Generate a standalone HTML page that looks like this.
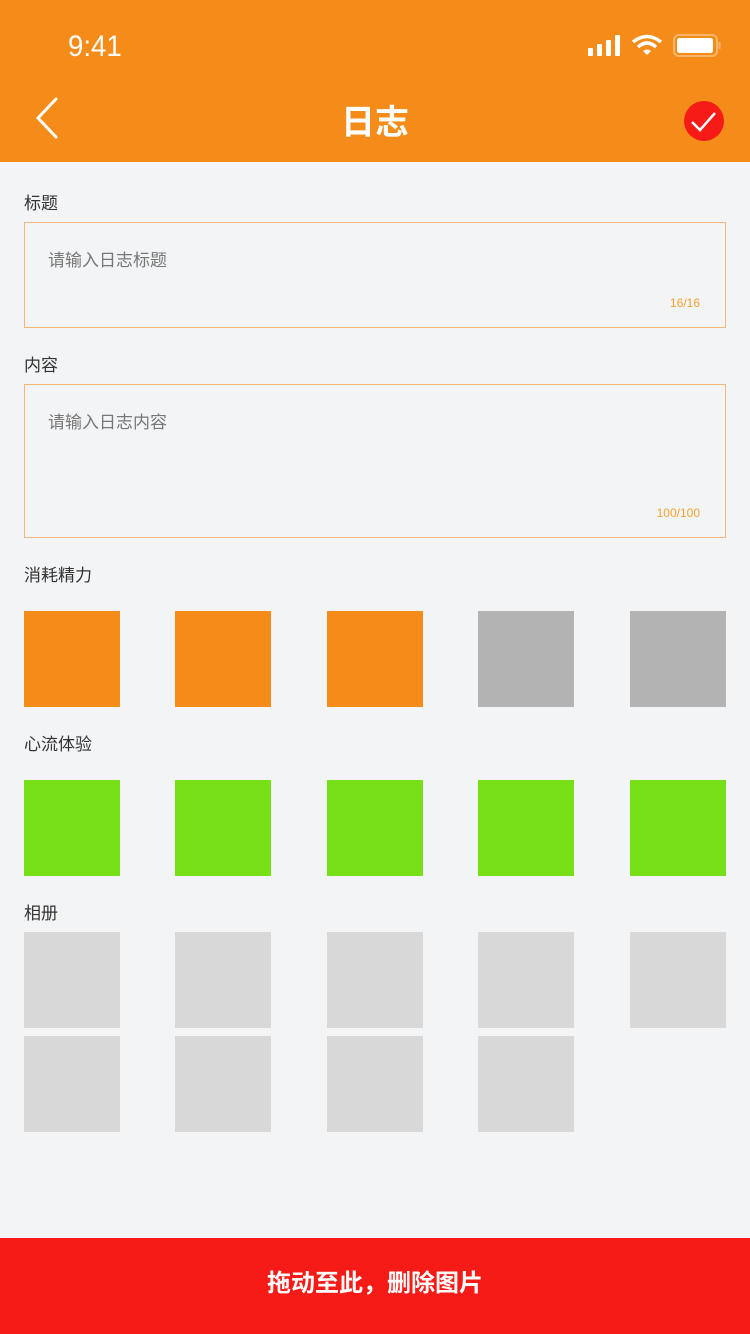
<!DOCTYPE html><html><head><meta charset="utf-8"><style>
body{margin:0;width:750px;height:1334px;background:#f3f4f6;position:relative;font-family:"Liberation Sans","Noto Sans CJK SC",sans-serif;overflow:hidden}
.a{position:absolute}
.hd{left:0;top:0;width:750px;height:162px;background:#f58c1a}
.lb{left:24px;font-size:17px;color:#333}
.box{left:24px;width:700px;border:1px solid #f3b77a;box-sizing:content-box}
.ph{left:23px;top:23px;font-size:17px;color:#777}
.cnt{right:25px;font-size:12px;color:#f5a030}
.sq{width:96px;height:96px}
</style></head><body>
<div class="a hd"></div>
<div class="a" style="left:68px;top:30px;font-size:30px;color:#fff;transform:scaleX(0.92);transform-origin:left">9:41</div>
<svg class="a" style="left:586px;top:34px" width="140" height="26">
<rect x="2" y="14" width="5" height="8" rx="1" fill="#fff"/><rect x="11" y="10" width="5" height="12" rx="1" fill="#fff"/><rect x="20" y="6" width="5" height="16" rx="1" fill="#fff"/><rect x="29" y="1" width="5" height="21" rx="1" fill="#fff"/>
<path d="M47 8 Q61 -3 75 8" stroke="#fff" stroke-width="3.5" fill="none"/><path d="M52 13 Q61 5 70 13" stroke="#fff" stroke-width="3.5" fill="none"/><path d="M57 17 L61 21 L65 17 Q61 14 57 17Z" fill="#fff"/>
<rect x="88" y="1" width="43" height="21" rx="5" stroke="#f7b56c" stroke-width="2" fill="none"/><rect x="91" y="4" width="36" height="15" rx="2.5" fill="#fff"/><rect x="132.5" y="8" width="2" height="7" fill="#f7b56c"/>
</svg>
<svg class="a" style="left:30px;top:96px" width="32" height="44"><path d="M26 3 L8 22 L26 41" stroke="#fff" stroke-width="3" fill="none" stroke-linecap="round"/></svg>
<div class="a" style="left:0;width:750px;top:95px;text-align:center;font-size:34px;color:#fff;font-weight:bold">日志</div>
<svg class="a" style="left:683px;top:100px" width="42" height="42"><circle cx="21" cy="21" r="20" fill="#f71b17"/><path d="M9 22 L17 30 L32 13" stroke="#fff" stroke-width="2.5" fill="none"/></svg>
<div class="a lb" style="top:189px">标题</div>
<div class="a box" style="top:222px;height:104px"><div class="a ph">请输入日志标题</div><div class="a cnt" style="top:73px">16/16</div></div>
<div class="a lb" style="top:351px">内容</div>
<div class="a box" style="top:384px;height:152px"><div class="a ph">请输入日志内容</div><div class="a cnt" style="top:121px">100/100</div></div>
<div class="a lb" style="top:561px">消耗精力</div>
<div class="a sq" style="left:24px;top:611px;background:#f58c1a"></div>
<div class="a sq" style="left:175px;top:611px;background:#f58c1a"></div>
<div class="a sq" style="left:327px;top:611px;background:#f58c1a"></div>
<div class="a sq" style="left:478px;top:611px;background:#b3b3b3"></div>
<div class="a sq" style="left:630px;top:611px;background:#b3b3b3"></div>
<div class="a lb" style="top:730px">心流体验</div>
<div class="a sq" style="left:24px;top:780px;background:#77e016"></div>
<div class="a sq" style="left:175px;top:780px;background:#77e016"></div>
<div class="a sq" style="left:327px;top:780px;background:#77e016"></div>
<div class="a sq" style="left:478px;top:780px;background:#77e016"></div>
<div class="a sq" style="left:630px;top:780px;background:#77e016"></div>
<div class="a lb" style="top:899px">相册</div>
<div class="a sq" style="left:24px;top:932px;background:#d8d8d8"></div>
<div class="a sq" style="left:175px;top:932px;background:#d8d8d8"></div>
<div class="a sq" style="left:327px;top:932px;background:#d8d8d8"></div>
<div class="a sq" style="left:478px;top:932px;background:#d8d8d8"></div>
<div class="a sq" style="left:630px;top:932px;background:#d8d8d8"></div>
<div class="a sq" style="left:24px;top:1036px;background:#d8d8d8"></div>
<div class="a sq" style="left:175px;top:1036px;background:#d8d8d8"></div>
<div class="a sq" style="left:327px;top:1036px;background:#d8d8d8"></div>
<div class="a sq" style="left:478px;top:1036px;background:#d8d8d8"></div>
<div class="a" style="left:0;top:1238px;width:750px;height:96px;background:#f71b17;color:#fff;font-size:24px;font-weight:bold;text-align:center;line-height:92px">拖动至此，删除图片</div>
</body></html>
